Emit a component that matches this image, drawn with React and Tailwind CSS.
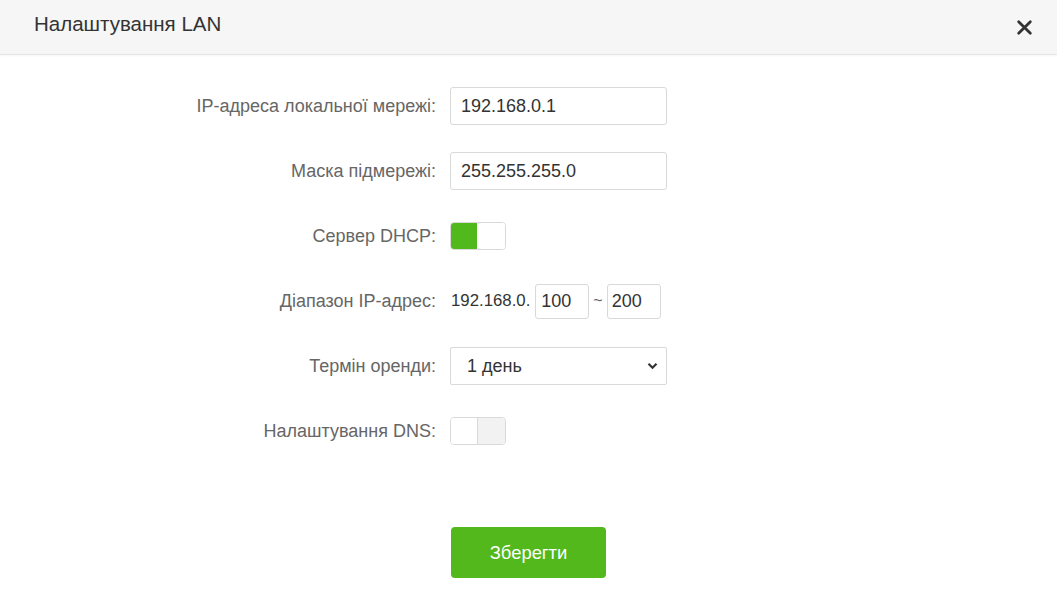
import React, { useState } from 'react';

const Row = ({ label, children }) => (
  <div className="flex items-center h-[38px]">
    <label className="w-[436px] text-right text-[18px] text-[#666]">{label}</label>
    <div className="ml-[14px] flex items-center">{children}</div>
  </div>
);

const Toggle = ({ on, onClick }) => (
  <button
    onClick={onClick}
    className="flex w-[56px] h-[28px] rounded-[4px] border border-[#d9d9d9] overflow-hidden"
  >
    {on ? (
      <>
        <span className="w-[26px] h-full bg-[#52b91c]" />
        <span className="flex-1 h-full bg-white" />
      </>
    ) : (
      <>
        <span className="w-[27px] h-full bg-white border-r border-[#d9d9d9]" />
        <span className="flex-1 h-full bg-[#f2f2f2]" />
      </>
    )}
  </button>
);

export default function App() {
  const [dhcp, setDhcp] = useState(true);
  const [dns, setDns] = useState(false);

  return (
    <div className="w-[1057px] h-[600px] bg-white font-['Liberation_Sans',Arial,sans-serif] text-[#333]">
      {/* Header */}
      <div className="h-[55px] bg-[#f6f6f6] border-b border-[#e4e4e4] shadow-[0_1px_2px_rgba(0,0,0,0.04)] flex items-center justify-between pl-[34px] pr-[24px]">
        <h1 className="text-[20.5px] text-[#333] -mt-[6px]">Налаштування LAN</h1>
        <button className="text-[#333]">
          <svg width="17" height="17" viewBox="0 0 16 16" fill="none" stroke="currentColor" strokeWidth="2.6" strokeLinecap="round">
            <path d="M2.5 2.5l11 11M13.5 2.5l-11 11" />
          </svg>
        </button>
      </div>

      {/* Form */}
      <div className="pt-[32px] flex flex-col gap-[27px]">
        <Row label="IP-адреса локальної мережі:">
          <input
            defaultValue="192.168.0.1"
            className="w-[217px] h-[38px] border border-[#d9d9d9] rounded-[3px] px-[10px] text-[18px] text-[#333] outline-none"
          />
        </Row>
        <Row label="Маска підмережі:">
          <input
            defaultValue="255.255.255.0"
            className="w-[217px] h-[38px] border border-[#d9d9d9] rounded-[3px] px-[10px] text-[18px] text-[#333] outline-none"
          />
        </Row>
        <Row label="Сервер DHCP:">
          <Toggle on={dhcp} onClick={() => setDhcp(!dhcp)} />
        </Row>
        <Row label="Діапазон IP-адрес:">
          <span className="text-[16.8px] text-[#333] pl-px">192.168.0.</span>
          <input
            defaultValue="100"
            className="ml-[5px] w-[54px] h-[35px] border border-[#d9d9d9] rounded-[3px] px-[5px] text-[18px] text-[#333] outline-none"
          />
          <span className="mx-[4px] text-[16px] text-[#666]">~</span>
          <input
            defaultValue="200"
            className="w-[54px] h-[35px] border border-[#d9d9d9] rounded-[3px] px-[4px] text-[18px] text-[#333] outline-none"
          />
        </Row>
        <Row label="Термін оренди:">
          <div className="relative w-[217px] h-[38px] border border-[#d9d9d9] rounded-[2px] flex items-center pl-[16px] text-[18px] text-[#333]">
            <span>1 день</span>
            <svg className="absolute right-[8px] top-[14px]" width="11" height="8" viewBox="0 0 11 8" fill="none" stroke="#333" strokeWidth="2.2">
              <path d="M1.5 1.8l4 4 4-4" />
            </svg>
          </div>
        </Row>
        <Row label="Налаштування DNS:">
          <Toggle on={dns} onClick={() => setDns(!dns)} />
        </Row>
      </div>

      {/* Save */}
      <div className="mt-[77px] pl-[451px]">
        <button className="w-[155px] h-[51px] rounded-[4px] bg-[#52b81c] text-white text-[18.4px]">
          Зберегти
        </button>
      </div>
    </div>
  );
}
